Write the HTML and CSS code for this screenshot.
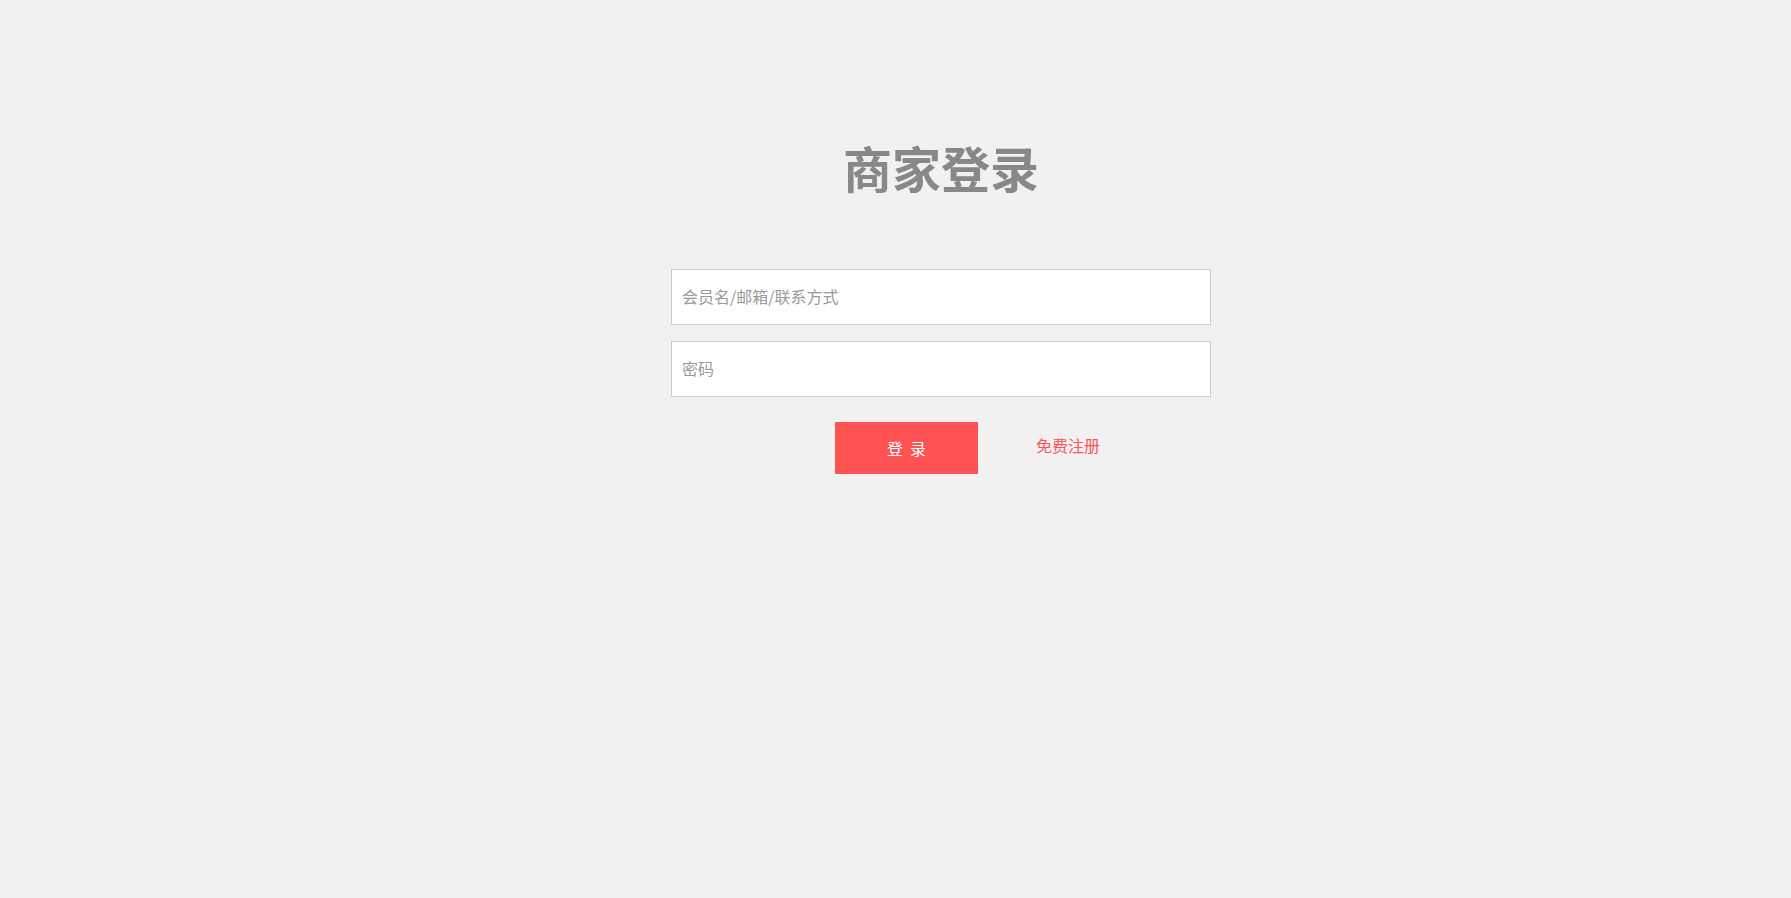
FILE: index.html
```html
<!DOCTYPE html>
<html lang="zh-CN">
<head>
<meta charset="utf-8">
<title>商家登录</title>
<link rel="stylesheet" href="styles.css">
</head>
<body>
<div class="page">
  <form class="login">
    <h1 class="login-title">商家登录</h1>
    <div class="fields">
      <input class="field" type="text" placeholder="会员名/邮箱/联系方式">
      <input class="field" type="password" placeholder="密码">
    </div>
    <div class="actions">
      <button class="btn-login" type="button">登&nbsp;&nbsp;录</button>
      <a class="link-register" href="#">免费注册</a>
    </div>
  </form>
</div>
</body>
</html>
```

FILE: styles.css
```css
html, body {
  margin: 0;
  padding: 0;
  height: 100%;
}
body {
  background: #f1f1f1;
  font-family: "Noto Sans CJK SC", "Noto Sans", sans-serif;
}
.page {
  display: flex;
  justify-content: center;
  padding-left: 91px;
  padding-top: 142px;
}
.login {
  width: 540px;
  margin: 0;
}
.login-title {
  margin: 0;
  font-size: 49px;
  line-height: 49px;
  font-weight: 700;
  color: #888888;
  text-align: center;
}
.fields {
  margin-top: 78px;
  display: flex;
  flex-direction: column;
  gap: 16px;
}
.field {
  box-sizing: border-box;
  width: 540px;
  height: 56px;
  margin: 0;
  padding: 0 10px 2px;
  border: 1px solid #cccccc;
  background: #ffffff;
  font-family: inherit;
  font-size: 16px;
  color: #333;
  outline: none;
}
.field::placeholder {
  color: #999999;
}
.actions {
  margin-top: 25px;
  display: flex;
  align-items: center;
  padding-left: 164px;
}
.btn-login {
  width: 143px;
  height: 52px;
  border: none;
  margin: 0;
  padding: 0 0 1px;
  background: #ff5353;
  color: #ffffff;
  font-family: inherit;
  font-size: 16px;
  cursor: pointer;
}
.link-register {
  margin-left: 58px;
  color: #ff5353;
  font-size: 16px;
  text-decoration: none;
  margin-top: -6px;
}
```
